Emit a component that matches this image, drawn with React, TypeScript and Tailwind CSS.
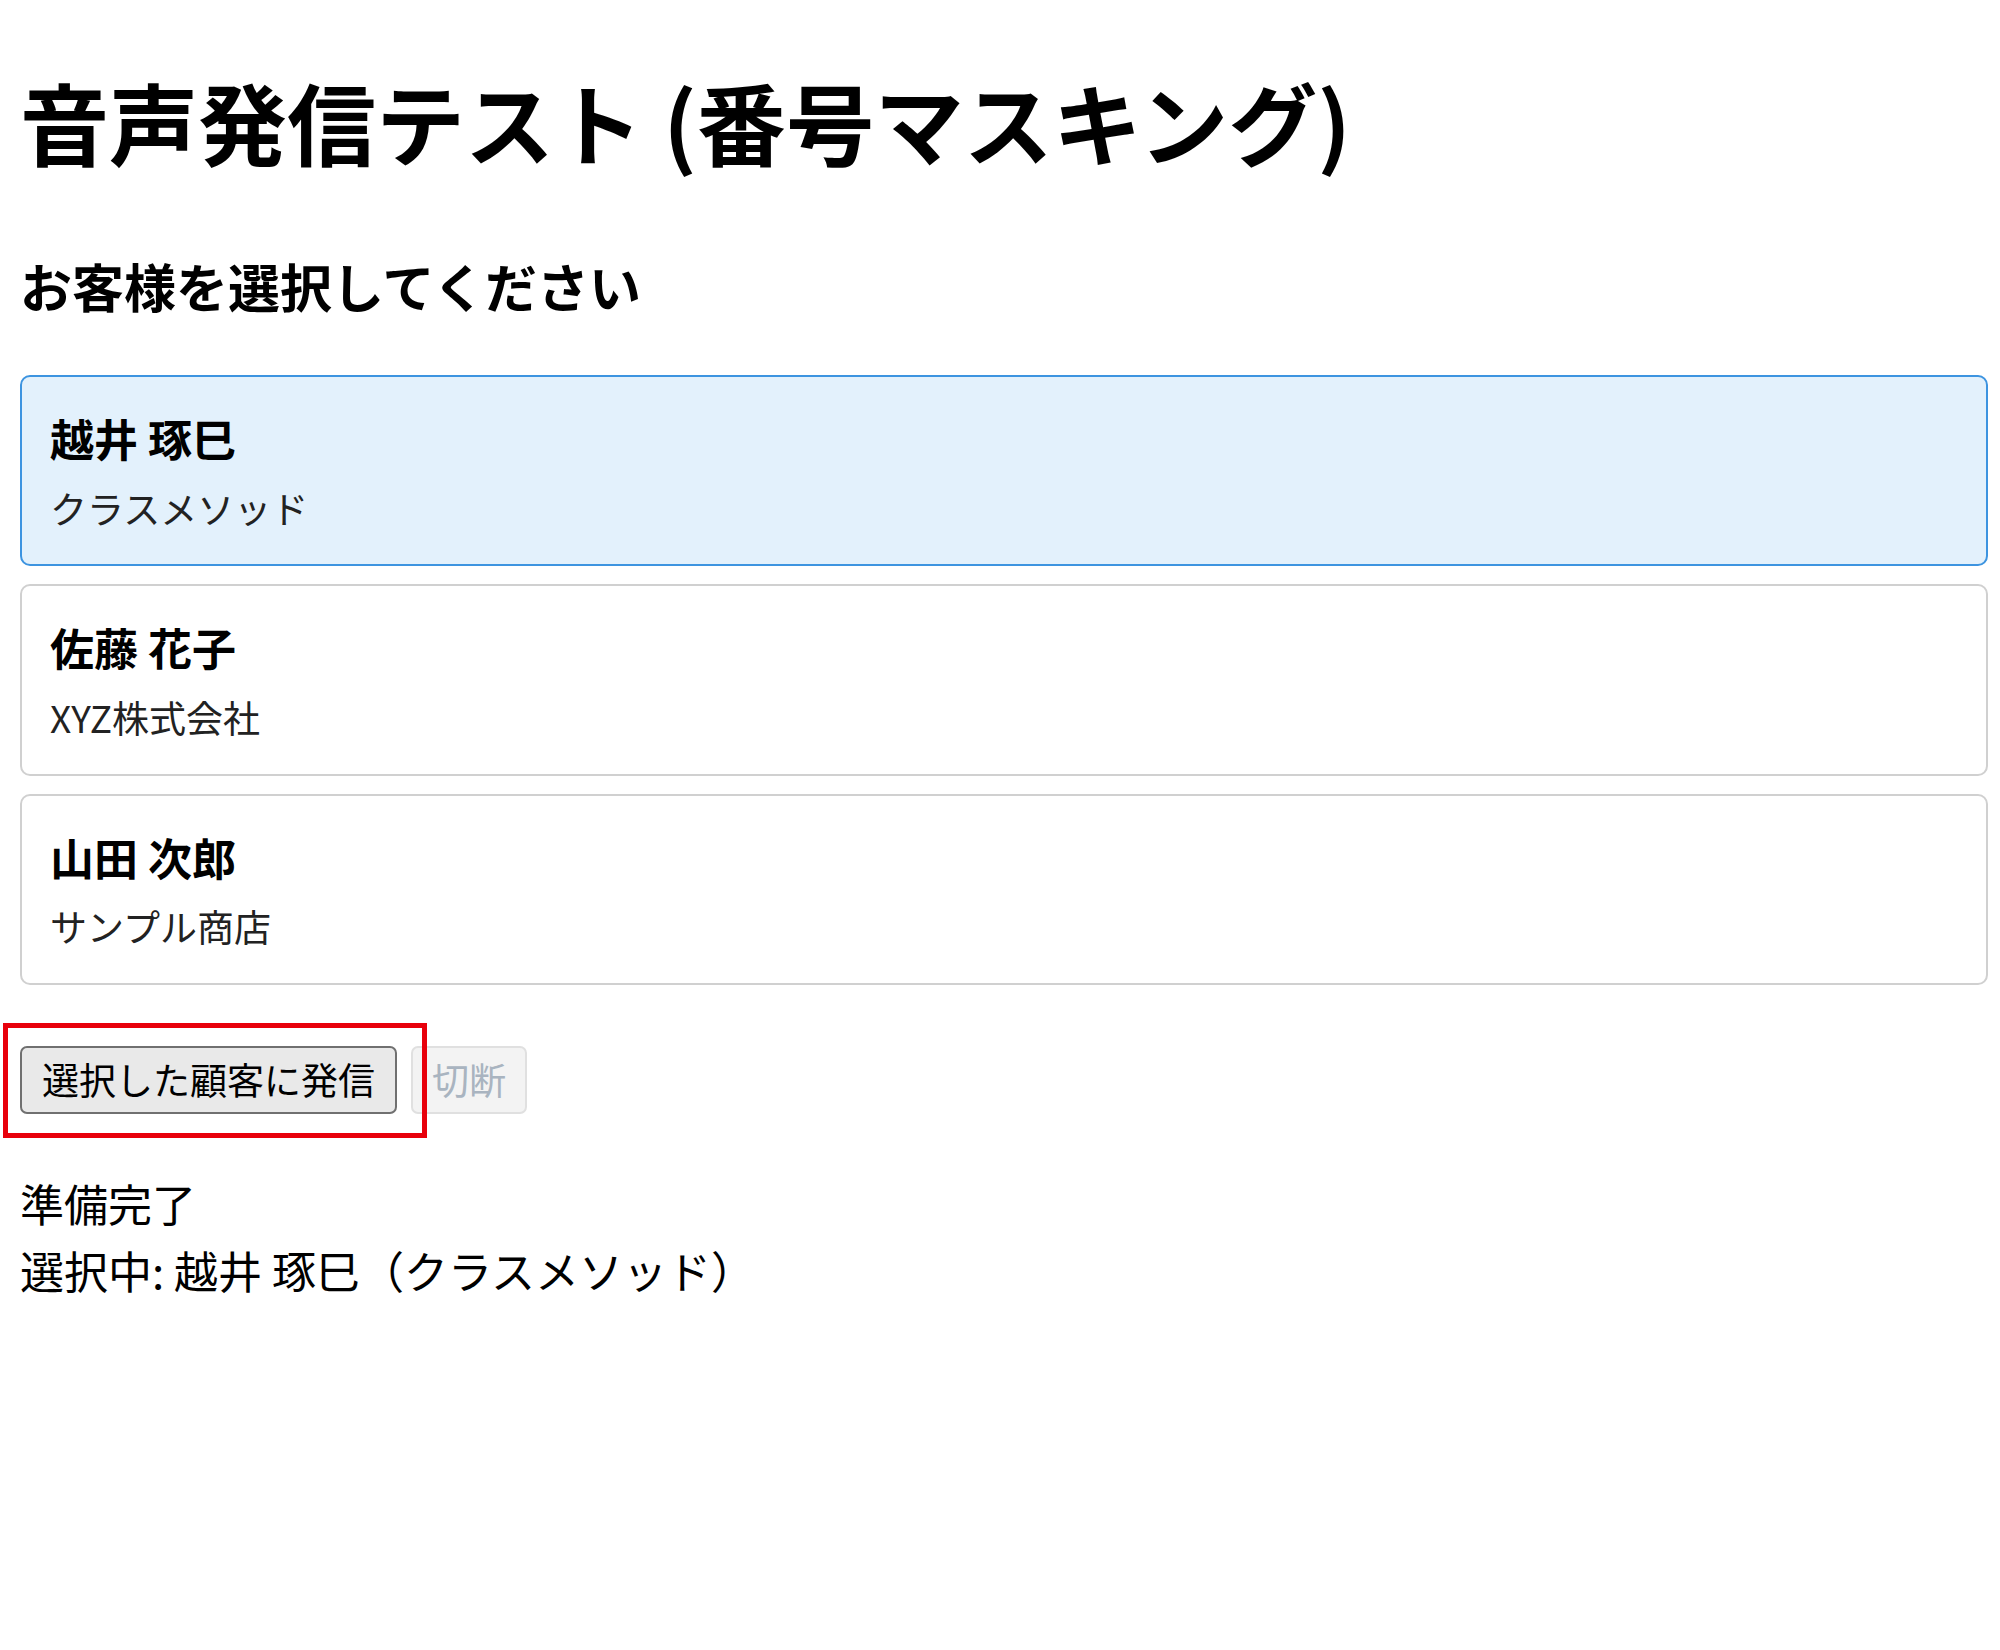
import { useState } from 'react'

const customers = [
  { id: 'koshii', name: '越井 琢巳', company: 'クラスメソッド' },
  { id: 'sato', name: '佐藤 花子', company: 'XYZ株式会社' },
  { id: 'yamada', name: '山田 次郎', company: 'サンプル商店' },
]

export default function App() {
  const [selectedId, setSelectedId] = useState('koshii')
  const selected = customers.find((c) => c.id === selectedId)

  return (
    <div
      className="min-h-screen bg-white pl-[20px] pr-[12px] text-black"
      style={{ fontFamily: '"Noto Sans CJK JP", "Noto Sans", sans-serif' }}
    >
      <h1 className="mt-[68px] text-[89px] font-bold leading-[1.2]">
        音声発信テスト (番号マスキング)
      </h1>

      <h3 className="mt-[80px] text-[52px] font-bold leading-[1.2]">
        お客様を選択してください
      </h3>

      {/* Customer list */}
      <div className="mt-[58px] flex flex-col gap-[18px]">
        {customers.map((c) => {
          const isActive = c.id === selectedId
          return (
            <div
              key={c.id}
              onClick={() => setSelectedId(c.id)}
              className={`cursor-pointer rounded-[10px] border-2 px-[28px] pt-[35px] pb-[34px] ${
                isActive ? 'border-[#3d94e0] bg-[#e3f1fc]' : 'border-[#d0d0d0] bg-white'
              }`}
            >
              <div className="text-[44px] font-bold leading-[1.2]">{c.name}</div>
              <div className="mt-[21px] text-[37px] leading-[1.2] text-[#222]">{c.company}</div>
            </div>
          )
        })}
      </div>

      {/* Actions */}
      <div className="relative mt-[61px] flex items-center gap-[14px]">
        <button className="h-[68px] rounded-[7px] border-2 border-[#707070] bg-[#e9e9e9] px-[20px] text-[37px] leading-none text-black">
          選択した顧客に発信
        </button>
        <button
          disabled
          className="h-[68px] rounded-[7px] border-2 border-[#e0e0e0] bg-[#f3f3f3] px-[19px] text-[37px] leading-none text-[#a9b4c0]"
        >
          切断
        </button>
        <div className="pointer-events-none absolute left-[-17px] top-[-23px] h-[115px] w-[424px] border-[5px] border-[#e8000b]" />
      </div>

      {/* Status */}
      <div className="mt-[56px] text-[44px] leading-[67px]">
        <div>準備完了</div>
        <div>
          選択中: {selected?.name}（{selected?.company}）
        </div>
      </div>
    </div>
  )
}
